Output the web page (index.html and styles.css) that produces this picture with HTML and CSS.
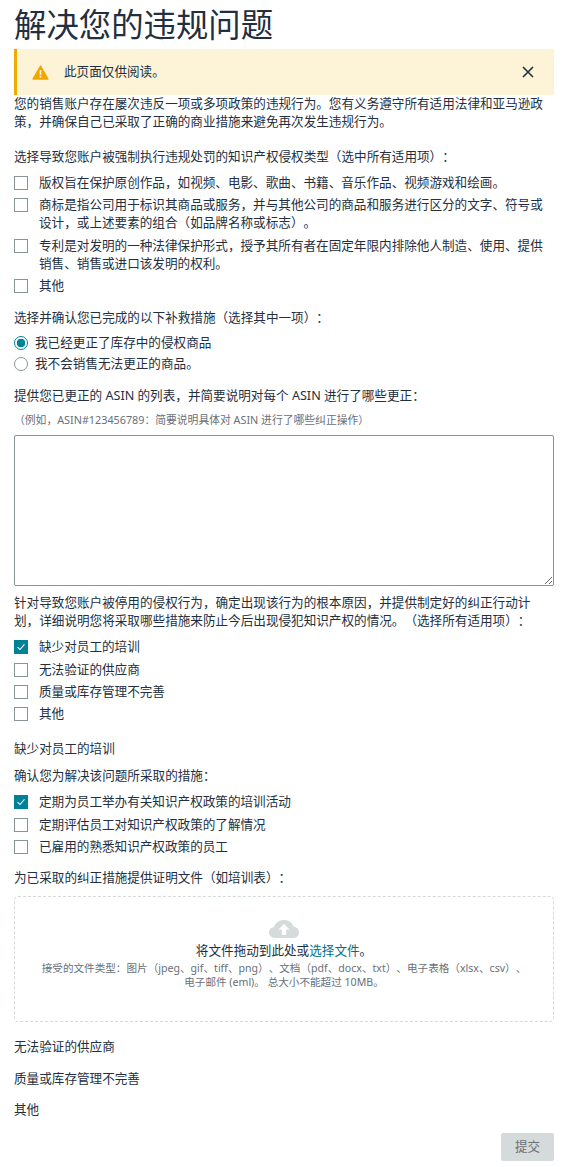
FILE: index.html
```html
<!DOCTYPE html>
<html lang="zh-CN">
<head>
    <meta charset="UTF-8">
    <meta name="viewport" content="width=device-width, initial-scale=1.0">
    <title>解决您的违规问题</title>
    <link rel="stylesheet" href="styles.css">
</head>
<body>
    <h1 class="page-title">解决您的违规问题</h1>

    <div class="alert">
        <svg class="alert-icon" viewBox="0 0 17 15" width="17" height="15">
            <path d="M8.5 1 L16 14 H1 Z" fill="#f0a800" stroke="#f0a800" stroke-width="1.4" stroke-linejoin="round"/>
            <rect x="7.7" y="5" width="1.6" height="4.8" fill="#fdf3d7"/>
            <rect x="7.7" y="10.8" width="1.6" height="1.8" fill="#fdf3d7"/>
        </svg>
        <span class="alert-text">此页面仅供阅读。</span>
        <svg class="alert-close" viewBox="0 0 12 12" width="12" height="12">
            <path d="M1 1 L11 11 M11 1 L1 11" stroke="#232f3e" stroke-width="1.6" fill="none"/>
        </svg>
    </div>

    <p class="intro">您的销售账户存在屡次违反一项或多项政策的违规行为。您有义务遵守所有适用法律和亚马逊政策，并确保自己已采取了正确的商业措施来避免再次发生违规行为。</p>

    <p class="label first-label">选择导致您账户被强制执行违规处罚的知识产权侵权类型（选中所有适用项）：</p>
    <div class="options">
        <label class="option"><input type="checkbox"><span>版权旨在保护原创作品，如视频、电影、歌曲、书籍、音乐作品、视频游戏和绘画。</span></label>
        <label class="option"><input type="checkbox"><span>商标是指公司用于标识其商品或服务，并与其他公司的商品和服务进行区分的文字、符号或设计，或上述要素的组合（如品牌名称或标志）。</span></label>
        <label class="option"><input type="checkbox"><span>专利是对发明的一种法律保护形式，授予其所有者在固定年限内排除他人制造、使用、提供销售、销售或进口该发明的权利。</span></label>
        <label class="option"><input type="checkbox"><span>其他</span></label>
    </div>

    <p class="label">选择并确认您已完成的以下补救措施（选择其中一项）：</p>
    <div class="options radio-options">
        <label class="option radio-option"><input type="radio" name="remedy" checked><span>我已经更正了库存中的侵权商品</span></label>
        <label class="option radio-option"><input type="radio" name="remedy"><span>我不会销售无法更正的商品。</span></label>
    </div>

    <p class="label">提供您已更正的 ASIN 的列表，并简要说明对每个 ASIN 进行了哪些更正：</p>
    <p class="hint">（例如，ASIN#123456789：简要说明具体对 ASIN 进行了哪些纠正操作）</p>
    <textarea class="asin-input"></textarea>

    <p class="label after-input">针对导致您账户被停用的侵权行为，确定出现该行为的根本原因，并提供制定好的纠正行动计划，详细说明您将采取哪些措施来防止今后出现侵犯知识产权的情况。（选择所有适用项）：</p>
    <div class="options">
        <label class="option"><input type="checkbox" checked><span>缺少对员工的培训</span></label>
        <label class="option"><input type="checkbox"><span>无法验证的供应商</span></label>
        <label class="option"><input type="checkbox"><span>质量或库存管理不完善</span></label>
        <label class="option"><input type="checkbox"><span>其他</span></label>
    </div>

    <p class="label cause-title">缺少对员工的培训</p>
    <p class="label">确认您为解决该问题所采取的措施：</p>
    <div class="options">
        <label class="option"><input type="checkbox" checked><span>定期为员工举办有关知识产权政策的培训活动</span></label>
        <label class="option"><input type="checkbox"><span>定期评估员工对知识产权政策的了解情况</span></label>
        <label class="option"><input type="checkbox"><span>已雇用的熟悉知识产权政策的员工</span></label>
    </div>

    <p class="label upload-label">为已采取的纠正措施提供证明文件（如培训表）：</p>
    <div class="dropzone">
        <svg class="cloud" viewBox="0 0 30 18" width="30" height="18">
            <path d="M7 18 C3 18 0 15.6 0 12.4 C0 9.8 2 7.6 5 7.1 C6 3 10 0 15 0 C19.6 0 23.4 2.6 24.5 6.6 C27.7 7.1 30 9.4 30 12.4 C30 15.6 27.2 18 23.6 18 Z" fill="#d5dbdb"/>
            <path d="M15 3.8 L20.4 9.4 H17.2 V15 H12.8 V9.4 H9.6 Z" fill="#fff"/>
        </svg>
        <p class="drop-main">将文件拖动到此处或<a href="#">选择文件</a>。</p>
        <p class="drop-note">接受的文件类型：图片（jpeg、gif、tiff、png）、文档（pdf、docx、txt）、电子表格（xlsx、csv）、电子邮件 (eml)。 总大小不能超过 10MB。</p>
    </div>

    <p class="label cause-title after-drop">无法验证的供应商</p>
    <p class="label cause-title tall">质量或库存管理不完善</p>
    <p class="label cause-title tall">其他</p>

    <div class="actions">
        <button class="submit-btn" disabled>提交</button>
    </div>
</body>
</html>
```

FILE: styles.css
```css
* {
    box-sizing: border-box;
    margin: 0;
    padding: 0;
}

body {
    font-family: "Noto Sans", "Noto Sans CJK SC", sans-serif;
    font-size: 12.6px;
    line-height: 18px;
    color: #232f3e;
    background: #fff;
    padding: 4px 11px 6px 14px;
    text-spacing-trim: space-all;
}

.page-title {
    font-size: 32.4px;
    line-height: 40px;
    font-weight: 400;
    margin-bottom: 5px;
}

.alert {
    display: flex;
    align-items: center;
    height: 46px;
    background: #fdf3d7;
    border-left: 3px solid #f0ab00;
    padding: 0 20px 0 15px;
}

.alert-icon {
    flex: none;
    margin-right: 15px;
}

.alert-text {
    flex: 1;
}

.alert-close {
    flex: none;
}

.label {
    margin-top: 14px;
}

.first-label {
    margin-top: 17px;
}

.options {
    display: flex;
    flex-direction: column;
    gap: 4.4px;
    margin-top: 8px;
}

.radio-options {
    gap: 3px;
    margin-top: 7px;
}

.option {
    display: flex;
    align-items: flex-start;
    gap: 11px;
}

.option input {
    appearance: none;
    flex: none;
    width: 14px;
    height: 14px;
    margin-top: 2px;
    border: 1px solid #879596;
    background: #fff;
}

.option input[type="checkbox"]:checked {
    border-color: #008296;
    background: #008296 url("data:image/svg+xml,%3Csvg xmlns='http://www.w3.org/2000/svg' viewBox='0 0 14 14'%3E%3Cpath d='M3 7.2 L5.8 10 L11 4' stroke='%23fff' stroke-width='1.2' fill='none'/%3E%3C/svg%3E") center no-repeat;
}

.radio-option {
    gap: 7px;
}

.radio-option input {
    border-radius: 50%;
}

.radio-option input:checked {
    border-color: #008296;
    background: radial-gradient(circle, #008296 0, #008296 4px, #fff 4.6px);
}

.hint {
    font-size: 10.8px;
    color: #687078;
    margin-top: 6px;
}

.asin-input {
    display: block;
    width: 100%;
    height: 151px;
    margin-top: 6px;
    border: 1px solid #879596;
    border-radius: 2px;
    background: #fff;
}

.after-input {
    margin-top: 8px;
}

.cause-title {
    margin-top: 17px;
}

.cause-title + .label {
    margin-top: 9px;
}

.cause-title + .tall {
    margin-top: 13.4px;
}

.upload-label {
    margin-top: 13px;
}

.dropzone {
    display: flex;
    flex-direction: column;
    align-items: center;
    height: 126px;
    margin-top: 9px;
    padding: 23px 16px 0;
    border: 1px dashed #d5dbdb;
    border-radius: 4px;
    text-align: center;
}

.cloud {
    flex: none;
}

.drop-main {
    margin-top: 4px;
}

.drop-main a {
    color: #007185;
    text-decoration: none;
}

.drop-note {
    font-size: 10.6px;
    line-height: 14px;
    color: #687078;
    margin-top: 1px;
    max-width: 492px;
}

.after-drop {
    margin-top: 16px;
}

.actions {
    display: flex;
    justify-content: flex-end;
    margin-top: 14.2px;
}

.submit-btn {
    width: 53px;
    height: 28px;
    border: none;
    border-radius: 2px;
    background: #d5dbdb;
    color: #687078;
    font: inherit;
}
```
